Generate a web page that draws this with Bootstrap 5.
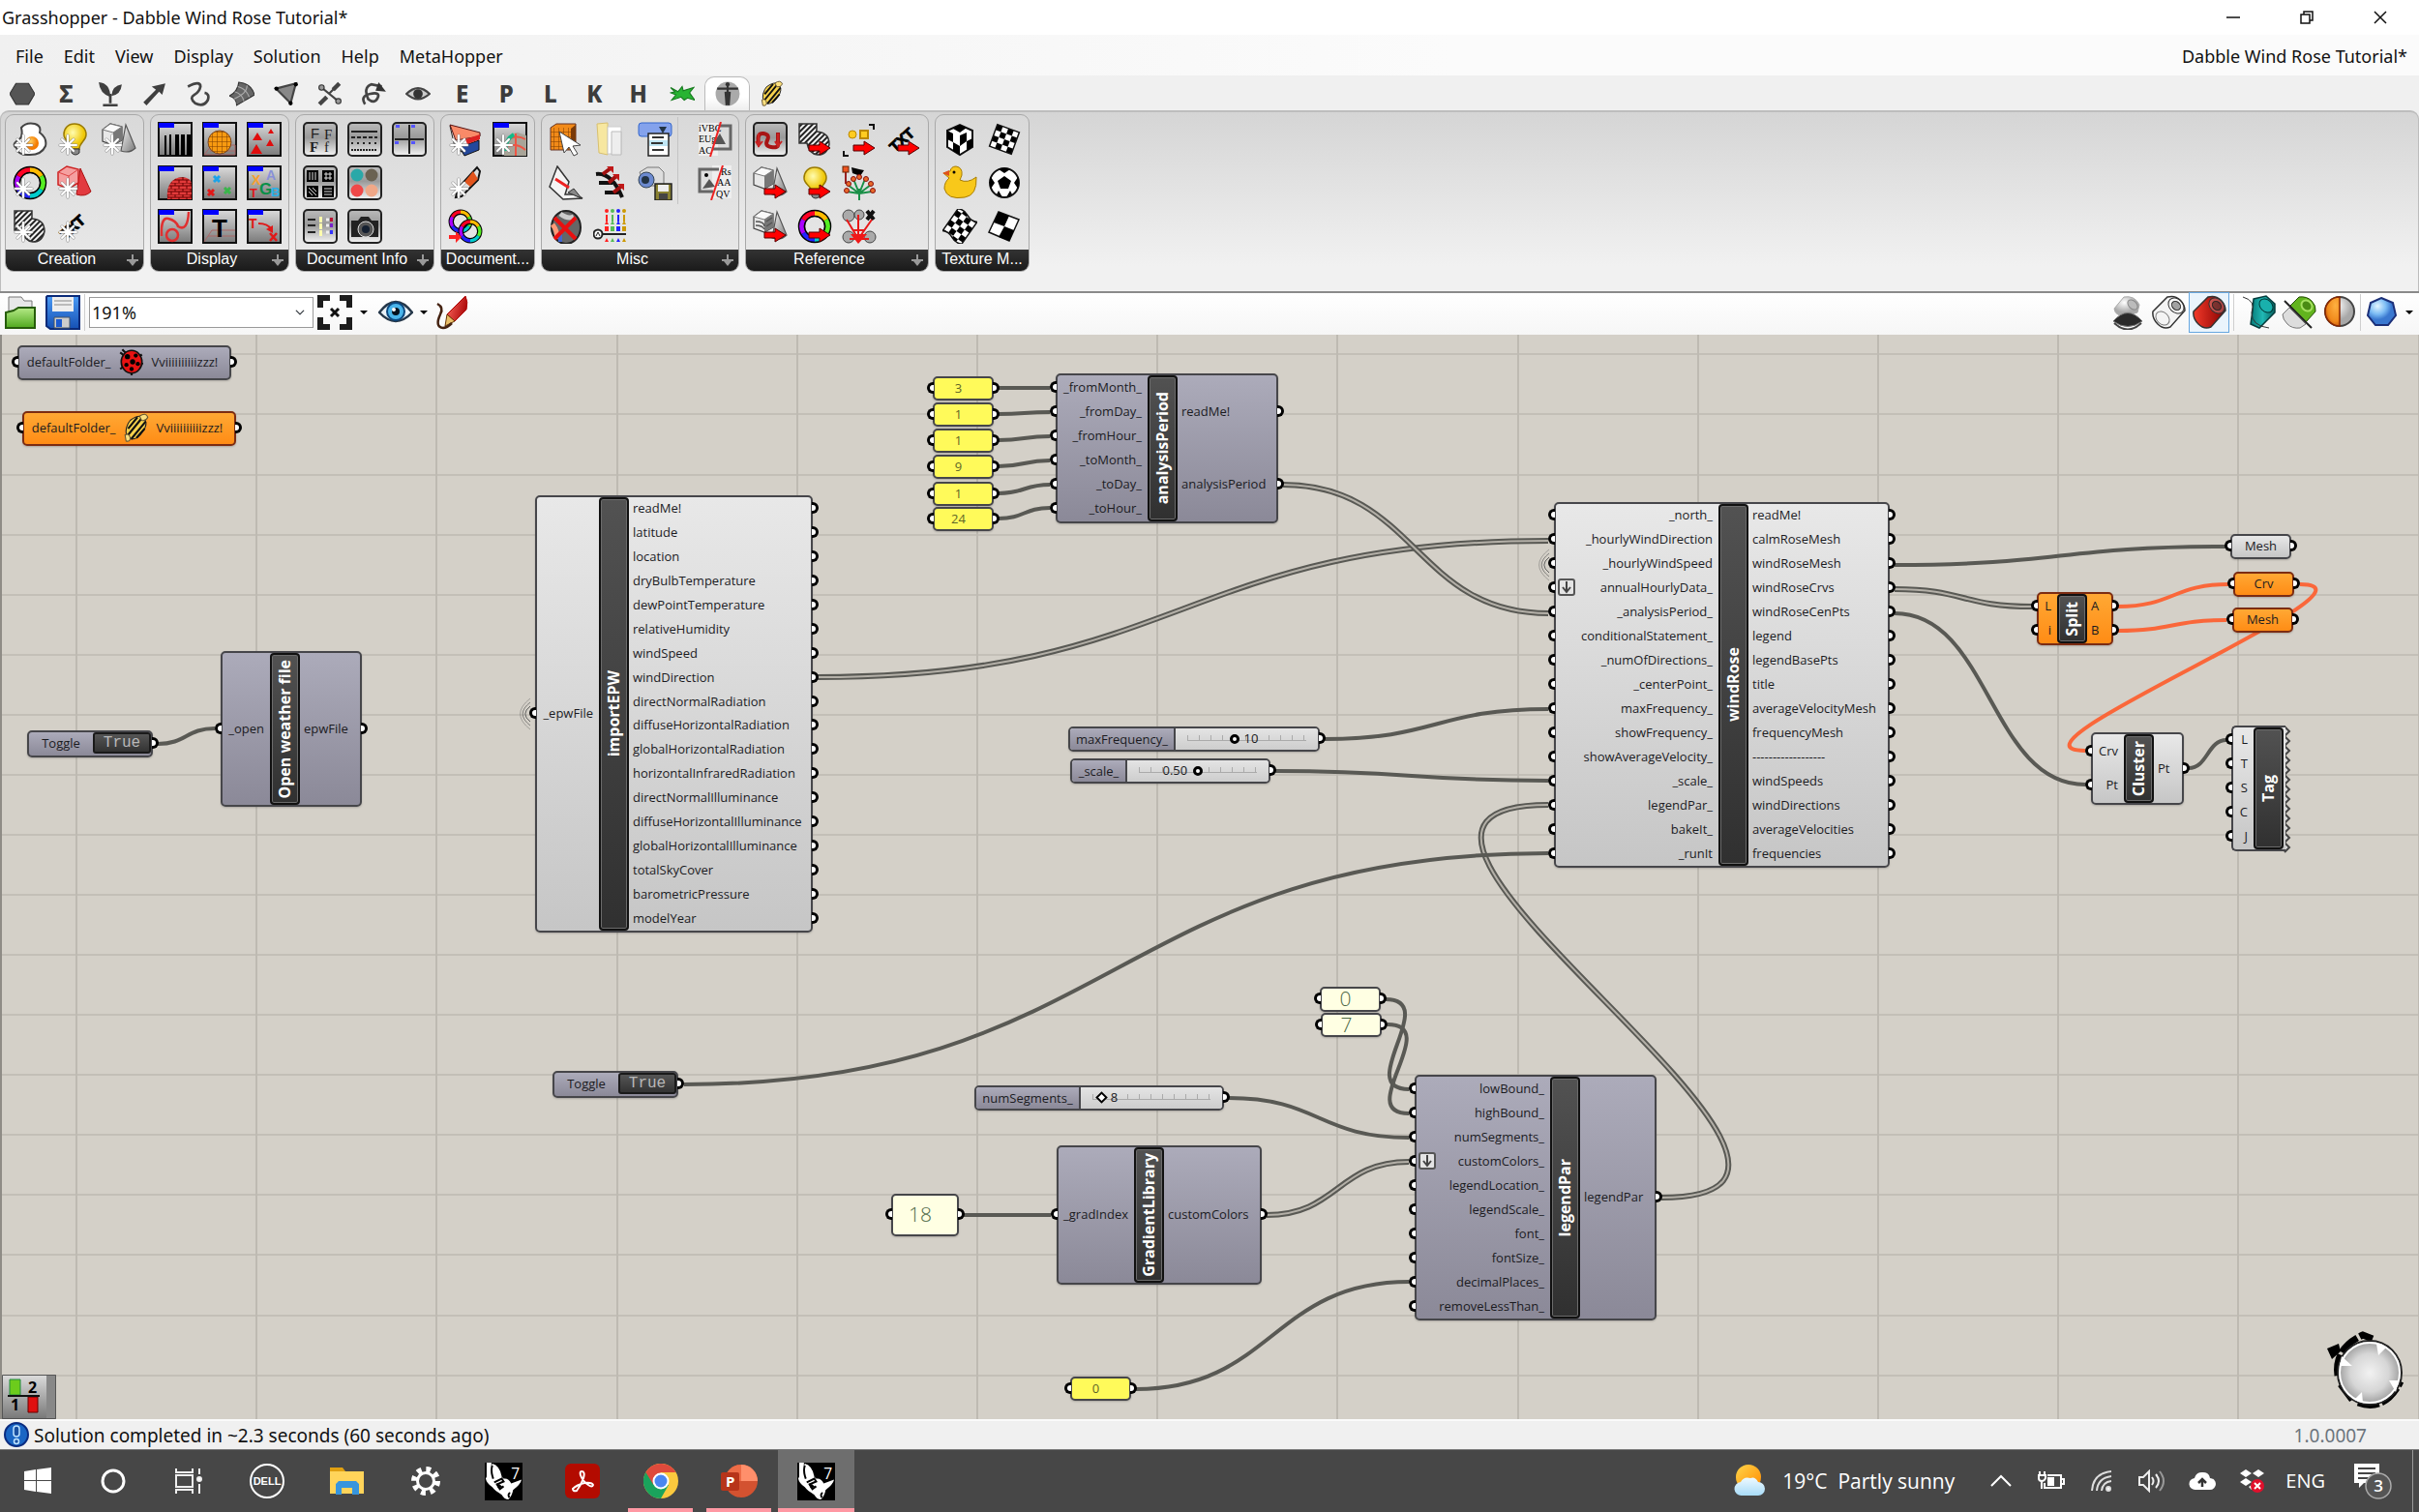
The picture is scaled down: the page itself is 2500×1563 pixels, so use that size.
<!DOCTYPE html>
<html lang="en">
<head>
<meta charset="utf-8">
<meta name="viewport" content="width=device-width, initial-scale=1">
<title>Grasshopper - Dabble Wind Rose Tutorial*</title>
<link href="https://cdn.jsdelivr.net/npm/bootstrap@5.3.0/dist/css/bootstrap.min.css" rel="stylesheet">
<style>
body{font-family:"Noto Sans","Open Sans",sans-serif;font-size:18px;line-height:24px;color:#111;background:#f0f0f0}
button{background:none;border:0;padding:0;color:inherit}
svg{display:block;flex:none}
.ic{width:36px;height:36px}
.titlebar{height:36px;background:#fff;padding:0 2px}
.winctl button{width:76px;height:36px}
.menubar{height:42px;padding:2px 12px 0 16px;background:linear-gradient(90deg,#f0f0f0,#fbfbfb 60%)}
.menubar a{color:#111;text-decoration:none}
.menus{gap:21px}
.tabs{height:36px;width:821px;padding-top:1px}
.tabs button{color:#3c3c3c;font-size:24px;font-weight:800}
.tabs button.on{background:linear-gradient(#fff 60%,#eee);border:1px solid #bbb;border-bottom:0;border-radius:10px 10px 0 0}
.ribbon{height:187px;gap:6px;border:1px solid #bdbdbd;border-top-width:2px;border-bottom:0;border-radius:9px 9px 0 0;background:linear-gradient(#d5d5d5,#f1f1f1 86%);padding:2px 4px}
.panelbox{border:1px solid #a9a9a9;border-radius:9px;background:linear-gradient(#d9d9d9,#e9e9e9);overflow:hidden;height:163px}
.cells{display:grid;grid-auto-flow:row;grid-auto-rows:45px;padding:2px 2px 0;height:139px}
.c2{grid-template-columns:repeat(2,46px)}
.c3{grid-template-columns:repeat(3,46px)}
.c4{grid-template-columns:repeat(4,46px)}
.cm{grid-template-columns:repeat(3,46px) 61px}
.cells button{display:flex;align-items:center;justify-content:center}
.cm button.far{padding-left:15px;border-left:1px solid #c4c4c4}
.cap{background:linear-gradient(#333,#1a1a1a);color:#fff;height:22px;font:16px/20px "Liberation Sans",sans-serif;padding:0 4px}
.toolbar{height:45px;border-top:2px solid #8a8a8a;background:linear-gradient(#fff,#f6f6f6);padding:0 2px 3px 3px}
.toolbar .form-select{width:232px;height:32px;border:1px solid #9a9a9a;border-radius:0;padding:0 8px 0 2px;font-size:18px;color:#111;background-color:#fff;background-size:12px 10px;background-position:right 7px center}
.tb{width:42px;height:42px;display:flex;align-items:center;justify-content:center}
.tb.slim{width:40px}
.tb.wide{width:44px}
.tb.on{border:1px solid #66a7e0;background:#eaf4fc}
.tsep{width:1px;height:38px;background:#cfcfcf}
.caret{width:0;height:0;border:4px solid transparent;border-top-color:#000;border-bottom:0}
.board{background-color:#d4d0c8;border-left:2px solid #8f8c86;min-height:0;font-family:"Open Sans","Noto Sans",sans-serif;font-size:13px;line-height:18px;color:#1c1c1c}
.board .wires{position:absolute;inset:0;width:100%;height:100%}
.node{position:absolute;border:2px solid #46464a;border-radius:5px;display:flex;color:#1b1b1f;box-shadow:0 1px 2px rgba(0,0,0,.2)}
.node.off{background:linear-gradient(#acabba,#8b8998)}
.node.lit{background:linear-gradient(#e8e8e8,#c6c6c6)}
.node.sel{background:linear-gradient(#ffa834,#ff8c15);border-color:#7c2c12}
.node.yel{background:#fffa5a}
.node.pale{background:#ffffe3}
.node.torn{border-right:0;border-radius:5px 0 0 5px;box-shadow:none}
.ports{display:flex;flex-direction:column}
.port{position:relative;flex:1 1 0;display:flex;align-items:center;white-space:nowrap;padding-bottom:2px}
.ins{flex:none}
.ins .port{justify-content:flex-end;padding-right:6px}
.outs{flex:1 1 0;min-width:0}
.outs .port{padding-left:4px}
.torn .outs{display:none}
.gin::before,.gout::after{content:"";position:absolute;top:50%;margin-top:-7px;width:7px;height:12px;background:#fff;border:3px solid #000}
.gin::before{left:-8px;border-right:0;border-radius:7px 0 0 7px}
.gout::after{right:-8px;border-left:0;border-radius:0 7px 7px 0}
.spine{width:31px;flex:none;border:2px solid #111;border-radius:4px;background:linear-gradient(#525252,#303030);box-shadow:inset 0 0 0 1px #6b6b6b;color:#fff;font-weight:700;font-size:16px;display:flex;align-items:center;justify-content:center}
.spine span{writing-mode:vertical-rl;transform:rotate(180deg);line-height:22px;padding-left:2px;white-space:nowrap}
.pull{position:absolute;left:2px;top:50%;margin-top:-10px}
.chip{justify-content:center;align-items:center}
.bug{margin:0 8px}
.battery .chip{padding-right:4px}
.mono{font-size:13px;color:#5f6628}
.mono .chip{padding-right:10px}
.mono.big{font-size:21px;font-weight:300;color:#4f6a48}
.truebox{font-family:"Liberation Mono",monospace;font-size:16px;color:#b8b8b8;background:linear-gradient(#555,#333);border:2px solid #1a1a1a;border-radius:3px;width:60px;line-height:18px;text-align:center}
.slabel{display:flex;align-items:center;justify-content:center;border-right:2px solid #46464a;background:linear-gradient(#acabba,#8b8998);border-radius:3px 0 0 3px;padding-bottom:1px}
.srail{position:relative;flex:1 1 0;padding:0 7px;background:linear-gradient(#e4e4e4,#cdcdcd);border-radius:0 3px 3px 0}
.srail input{appearance:none;-webkit-appearance:none;width:100%;height:21px;margin:0;display:block;background:linear-gradient(#aaa,#aaa) 5px 12px/calc(100% - 10px) 1px no-repeat,repeating-linear-gradient(90deg,#aaa 0 1px,transparent 1px 12px) 5px 7px/calc(100% - 10px) 6px no-repeat}
.srail input::-webkit-slider-thumb{-webkit-appearance:none;width:10px;height:10px;border:3px solid #000;border-radius:50%;background:#fff}
.srail input.dia::-webkit-slider-thumb{width:9px;height:9px;border-width:2px;border-radius:0;transform:rotate(45deg)}
.sval{position:absolute;top:1px}
.corner{position:absolute;left:0;bottom:0;width:56px;height:46px}
.compass{position:absolute;right:11px;bottom:9px}
.statusbar{height:31px;background:#f0f0f0;border-top:2px solid #fafafa;padding:0 54px 0 4px;font-size:19px}
.taskbar{height:65px;background:#474747;color:#fff;border-top:1px solid #777;font-family:"Open Sans","Noto Sans",sans-serif;font-size:21px}
.tk{width:81px;height:64px;display:flex;align-items:center;justify-content:center}
.tk.nar{width:78px}
.tk.dell{width:84px}
.tk.run{border-bottom:4px solid #ff98a3;width:67px;margin:0 7px;padding-top:4px}
.tk.act{background:#6e6e6e;width:79px;margin:0}
.weather{margin-right:6px}
.tray{padding-right:6px}
.tray button{display:flex;align-items:center;justify-content:center;width:52px;height:64px}
.notify{margin-right:14px}
.edge{border-right:1px solid #999;height:64px}
</style>
<script src="https://cdn.jsdelivr.net/npm/bootstrap@5.3.0/dist/js/bootstrap.bundle.min.js"></script>
</head>
<body>
<svg width="0" height="0" class="position-absolute" aria-hidden="true">
<defs>
<linearGradient id="gG" x2="1" y2="1"><stop stop-color="#fafafa"/><stop offset="1" stop-color="#777"/></linearGradient>
<linearGradient id="gTile" x2="0" y2="1"><stop stop-color="#ddd"/><stop offset="1" stop-color="#777"/></linearGradient>
<linearGradient id="gTile2" x2="0" y2="1"><stop stop-color="#bbb"/><stop offset=".45" stop-color="#999"/><stop offset="1" stop-color="#f4f4f4"/></linearGradient>
<linearGradient id="gRed" x2="1"><stop stop-color="#f33a2a"/><stop offset="1" stop-color="#850000"/></linearGradient>
<linearGradient id="gTeal" x2="1"><stop stop-color="#067a78"/><stop offset=".5" stop-color="#20b8b4"/><stop offset="1" stop-color="#06615f"/></linearGradient>
<linearGradient id="gGreen" x2="0" y2="1"><stop stop-color="#b6ea88"/><stop offset="1" stop-color="#4fa81d"/></linearGradient>
<linearGradient id="gBlue" x2="0" y2="1"><stop stop-color="#4b9bf5"/><stop offset="1" stop-color="#1550b4"/></linearGradient>
<linearGradient id="gPen" x2="1" y2=".3"><stop stop-color="#ff6a60"/><stop offset="1" stop-color="#b00c0c"/></linearGradient>
<radialGradient id="gBulb" cx=".4" cy=".35"><stop stop-color="#fffcb0"/><stop offset="1" stop-color="#f0c808"/></radialGradient>
<radialGradient id="gYolk" cx=".4" cy=".35"><stop stop-color="#ffd060"/><stop offset="1" stop-color="#f47a00"/></radialGradient>
<radialGradient id="gDial"><stop stop-color="#f2f2f2"/><stop offset=".6" stop-color="#d6d6d6"/><stop offset="1" stop-color="#9a9a9a"/></radialGradient>
<radialGradient id="gSky" cx=".35" cy=".3"><stop stop-color="#e4f6ff"/><stop offset=".6" stop-color="#7cbcf4"/><stop offset="1" stop-color="#3a78d0"/></radialGradient>
<radialGradient id="gOrb" cx=".4" cy=".3"><stop stop-color="#fff"/><stop offset="1" stop-color="#a8a8a8"/></radialGradient>
<radialGradient id="gOrange" cx=".7" cy=".3" r=".9"><stop stop-color="#ffb040"/><stop offset=".6" stop-color="#f08a1c"/><stop offset="1" stop-color="#a83000"/></radialGradient>
<linearGradient id="gSun" x2="1" y2="1"><stop stop-color="#ffd54a"/><stop offset="1" stop-color="#ff8a00"/></linearGradient>
<linearGradient id="gCloud" x2="0" y2="1"><stop stop-color="#eef9ff"/><stop offset="1" stop-color="#a8dcf8"/></linearGradient>
<pattern id="pHatch" width="4" height="4" patternUnits="userSpaceOnUse" patternTransform="rotate(-45)"><rect width="4" height="4" fill="#f4f4f4"/><rect width="4" height="2" fill="#222"/></pattern>
<pattern id="pChk" width="12" height="12" patternUnits="userSpaceOnUse"><rect width="12" height="12" fill="#fff"/><path d="M0 0h6v6H0zM6 6h6v6H6z"/></pattern>
<pattern id="pBrick" width="8" height="6" patternUnits="userSpaceOnUse"><rect width="8" height="6" fill="#e23a3a"/><path d="M0 0h8M0 3h8M2 0v3M6 3v3" stroke="#600" stroke-width="1"/></pattern>
<pattern id="pGrid" width="5" height="5" patternUnits="userSpaceOnUse"><path d="M0 0h5M0 0v5" stroke="#7a3a00" stroke-width="1"/></pattern>
<symbol id="spark" viewBox="0 0 36 36"><g stroke="#8a8a8a" stroke-width="3" stroke-linecap="round"><path d="M11 14v19M3 24h17M5 18l12 12M17 18L5 30"/></g><g stroke="#fff" stroke-width="2" stroke-linecap="round"><path d="M11 14v19M3 24h17M5 18l12 12M17 18L5 30"/></g></symbol>
<symbol id="arr" viewBox="0 0 36 36"><path d="M12 24h11v-4l11 7-11 7v-4H12z" fill="#f00" stroke="#500"/></symbol>
<symbol id="tile" viewBox="0 0 36 36"><path d="M0 0h36v36H0z" fill="url(#gTile)"/><path d="M1 1h34v34H1z" fill="none" stroke="#111" stroke-width="2"/><path d="M1 1h16v5H1z" fill="#00f"/></symbol>
<symbol id="rt" viewBox="0 0 36 36"><rect x="1" y="1" width="34" height="34" rx="4" fill="url(#gTile2)" stroke="#222" stroke-width="2"/></symbol>
<symbol id="geo" viewBox="0 0 36 36"><path d="M25 3l10 24q-6 6-15 3z" fill="url(#gG)" stroke="#555" stroke-width="1.200"/><path d="M1 8l8-6 12 3v14l-9 5-11-4z" fill="#e8e8e8" stroke="#444" stroke-width="1.200"/><path d="M12 11l9-6v14l-9 5z" fill="#777"/><path d="M1 8l11 3 9-6-12-3z" fill="#fafafa" stroke="#777"/></symbol>
<symbol id="wheel" viewBox="0 0 36 36"><g fill="none" stroke-width="4.500"><circle cx="18" cy="18" r="13.500" stroke="#000" stroke-width="7.500"/><path d="M18 4.500a13.500 13.500 0 0 1 11.700 6.700" stroke="#fb0"/><path d="M29.700 11.200a13.500 13.500 0 0 1 0 13.600" stroke="#5e2"/><path d="M29.700 24.800A13.500 13.500 0 0 1 18 31.500" stroke="#0cc"/><path d="M18 31.500a13.500 13.500 0 0 1-11.700-6.700" stroke="#22f"/><path d="M6.300 24.800a13.500 13.500 0 0 1 0-13.600" stroke="#a0f"/><path d="M6.300 11.200A13.500 13.500 0 0 1 18 4.500" stroke="#f02"/></g></symbol>
<symbol id="bulb" viewBox="0 0 36 36"><path d="M18 2c7 0 12 5 12 11 0 7-7 8-7 15h-8c0-7-8-8-8-15C7 7 11 2 18 2z" fill="url(#gBulb)" stroke="#997a00" stroke-width="1.500"/><path d="M15 28h8v4q-4 4-8 0z" fill="#888" stroke="#333"/></symbol>
<symbol id="hatch" viewBox="0 0 36 36"><path d="M2 2h18v8q13 1 13 13-2 11-12 11-9-1-11-12H2z" fill="url(#pHatch)" stroke="#333" stroke-width="1.500"/></symbol>
<symbol id="txt" viewBox="0 0 36 36"><text x="9" y="32" transform="rotate(-42 9 32)" font-family="Liberation Sans" font-weight="700" font-size="15" stroke="#000">TXT</text></symbol>
<symbol id="bee" viewBox="0 0 24 28"><path d="M6 7q8-6 13-3 5 6-1 14-5 8-12 7-7-5-2-15z" fill="#f7d24c" stroke="#222"/><path d="M4 15l9-11M4 21L18 4M7 25L21 8M12 24l8-9" stroke="#111" stroke-width="2"/><path d="M15 3q6-4 8 1-2 4-6 3zM1 21q4-2 5 3 0 4-4 3z" fill="#fbe080" stroke="#653"/></symbol>
<symbol id="lady" viewBox="0 0 24 28"><path d="M1 5l4 3M3 2l4 4M22 7l-3 2M23 16l-3-1M1 21l4-3M12 27v-3" stroke="#111" stroke-width="2"/><ellipse cx="12" cy="14" rx="10" ry="11" fill="#e81212" stroke="#111" stroke-width="1.500"/><circle cx="8" cy="9" r="2.500"/><circle cx="16" cy="8" r="2"/><circle cx="7" cy="17" r="2"/><circle cx="13" cy="14" r="2.500"/><circle cx="18" cy="16" r="2"/><circle cx="12" cy="21" r="2"/></symbol>
<symbol id="rhino" viewBox="0 0 40 40"><path d="M0 0h40v40H0z"/><path d="M8 1q8 2 10 14l2 2q5-1 8 5l11-4q-1 5-9 11-1 6-5 10-4 0-7-5-7-4-10-8-6-4-7-9 3-6 7-16z" fill="#fff"/><path d="M7 0v14l-5 2V0z" fill="#fff"/><path d="M8 3q-2 6 1 14M10 21l8-4 2 3-7 3 3 5 4-3M26 37q-2-4 1-5" fill="none" stroke="#000" stroke-width="2"/><path d="M12 22l4 1 3 3-5 1z"/><text x="28" y="17" fill="#fff" font-family="Open Sans" font-size="16">7</text></symbol>
<symbol id="tube" viewBox="0 0 36 36"><path d="M2 17L17 2q8-2 13 3t5 11L20 33q-7 3-13-3T2 17z" stroke="#333" stroke-width="1.500"/><ellipse cx="26" cy="11" rx="9" ry="7" transform="rotate(45 26 11)" fill="rgba(255,255,255,.25)" stroke="#333"/><ellipse cx="26" cy="11" rx="5" ry="4" transform="rotate(45 26 11)" fill="rgba(0,0,0,.35)" stroke="#222"/></symbol>
</defs>
</svg>

<div class="d-flex flex-column vh-100 overflow-hidden">
<header>
<div class="titlebar d-flex align-items-center justify-content-between">
<span>Grasshopper - Dabble Wind Rose Tutorial*</span>
<div class="winctl d-flex">
<button aria-label="Minimize"><svg class="mx-auto" width="14" height="14" stroke="#111" stroke-width="1.500"><path d="M0 7h14"/></svg></button>
<button aria-label="Restore"><svg class="mx-auto" width="14" height="14" fill="none" stroke="#111" stroke-width="1.500"><path d="M1 4h9v9H1zM4 4V1h9v9h-3"/></svg></button>
<button aria-label="Close"><svg class="mx-auto" width="14" height="14" stroke="#111" stroke-width="1.500"><path d="M1 1l12 12M13 1L1 13"/></svg></button>
</div>
</div>
<nav class="menubar d-flex align-items-center justify-content-between">
<div class="menus d-flex"><a href="#">File</a><a href="#">Edit</a><a href="#">View</a><a href="#">Display</a><a href="#">Solution</a><a href="#">Help</a><a href="#">MetaHopper</a></div>
<span>Dabble Wind Rose Tutorial*</span>
</nav>
<div class="tabs d-flex" id="tabs"></div>
<div class="ribbon d-flex" id="ribbon"></div>
<div class="toolbar d-flex align-items-center">
<button class="tb slim" aria-label="Open"><svg class="ic"><path d="M4 2h13l3 4h8v14H4z" fill="#e8e8e8" stroke="#777"/><path d="M1 18l8-2 5-3h17v21H1z" fill="url(#gGreen)" stroke="#265c0a" stroke-width="2"/></svg></button>
<button class="tb wide" aria-label="Save"><svg class="ic"><path d="M2 1h33v34H5l-4-3V2z" fill="url(#gBlue)" stroke="#0a2a78" stroke-width="2"/><path d="M7 2h22v15H7z" fill="#eee"/><path d="M9 6h18M9 10h18" stroke="#bbb" stroke-width="2"/><path d="M9 23h16v11H9z" fill="#ccc" stroke="#456"/><path d="M11 25h6v8h-6z" fill="#1b5ad0"/></svg></button>
<div class="tsep me-1"></div>
<select class="form-select flex-shrink-0" aria-label="Zoom"><option>191%</option></select>
<button class="tb wide" aria-label="Zoom extents"><svg class="ic"><path d="M3 13V3h10M23 3h10v10M33 23v10H23M13 33H3V23" fill="none" stroke="#1c1c1c" stroke-width="6"/><path d="M14 14l8 8M22 14l-8 8" stroke="#111" stroke-width="3"/></svg></button>
<span class="caret ms-1"></span>
<button class="tb ms-2" aria-label="Preview"><svg class="ic"><path d="M1 18Q18-4 35 18 18 36 1 18z" fill="#e9f2f8" stroke="#26384a" stroke-width="2.500"/><circle cx="18" cy="17" r="9" fill="#49b4ea" stroke="#0b4880" stroke-width="2"/><circle cx="18" cy="17" r="4" fill="#04121e"/><circle cx="16" cy="15" r="2" fill="#fff"/></svg></button>
<span class="caret ms-1"></span>
<button class="tb ms-1" aria-label="Sketch"><svg class="ic"><path d="M32 1q3 6 1 14L21 27l-8-7z" fill="url(#gPen)" stroke="#a00"/><path d="M13 20l8 7-10 5z" fill="#eac06a" stroke="#630"/><path d="M3 9q7 4 3 11-6 13 3 14 4 0 9-5" fill="none" stroke="#421" stroke-width="2.500"/></svg></button>
<div class="d-flex align-items-center ms-auto">
<button class="tb" aria-label="No preview"><svg class="ic"><path d="M4 14L14 2q11-2 16 8l-2 8-12 4q-11 0-12-8z" fill="url(#gOrb)" stroke="#aaa"/><ellipse cx="23" cy="10" rx="6" ry="4" transform="rotate(45 23 10)" fill="#bbb" stroke="#888"/><path d="M3 27q15-17 30 0-15 11-30 0z" fill="#2a2a2a" stroke="#777"/><path d="M4 29q14 13 28 0" fill="none" stroke="#444" stroke-width="2"/></svg></button>
<button class="tb" aria-label="Wireframe preview"><svg class="ic"><use href="#tube" fill="#f4f4f4"/><ellipse cx="12" cy="24" rx="8" ry="6" transform="rotate(45 12 24)" fill="none" stroke="#777"/></svg></button>
<button class="tb on" aria-label="Shaded preview"><svg class="ic"><use href="#tube" fill="url(#gRed)"/></svg></button>
<div class="tsep mx-1"></div>
<button class="tb" aria-label="Selected preview"><svg class="ic"><path d="M13 4l13-3 9 8v9L19 34l-9-4 2-14z" fill="url(#gTeal)" stroke="#043c3c" stroke-width="1.500"/><ellipse cx="26" cy="11" rx="8" ry="6" transform="rotate(45 26 11)" fill="#19b0ac" stroke="#033"/><path d="M2 2q14 4 9 16 0 14 18 16" fill="none" stroke="#333"/></svg></button>
<button class="tb" aria-label="Clip preview"><svg class="ic"><path d="M1 20l7-7 17 17-6 4q-8 1-13-4T1 20z" fill="#ddd" stroke="#777"/><path d="M9 11l9-9q8-1 13 4t4 11l-10 11z" fill="#62b41e" stroke="#244a06"/><ellipse cx="26" cy="11" rx="6" ry="5" transform="rotate(45 26 11)" fill="#4a8c14" stroke="#a4e060" stroke-width="2"/><path d="M3 6l28 28" stroke="#222" stroke-width="2"/></svg></button>
<button class="tb" aria-label="Material preview"><svg class="ic"><circle cx="18" cy="17" r="15" fill="url(#gOrb)" stroke="#444" stroke-width="2"/><path d="M18 2a15 15 0 0 0 0 30z" fill="url(#gOrange)" stroke="#8a2800" stroke-width="1.500"/></svg></button>
<div class="tsep"></div>
<button class="tb" aria-label="Quality"><svg class="ic"><path d="M18 3l12 5 3 13-8 10H12L4 21 7 8z" fill="url(#gSky)" stroke="#1b2f78" stroke-width="2"/></svg></button>
<span class="caret mx-1"></span>
</div>
</div>
</header>

<main class="board position-relative flex-grow-1 overflow-hidden" id="board">
<svg class="wires" id="wires"></svg>
<svg class="corner" viewBox="0 0 56 46"><path d="M0 0h56v46H0z" fill="url(#gTile)"/><path d="M46 0h10v46H46z" fill="#888"/><path d="M.5.5h55v45H.5z" fill="none" stroke="#555"/><path d="M8 5h11v16H8z" fill="#6ccc1c" stroke="#284"/><path d="M27 23h10v16H27z" fill="#e01010" stroke="#600"/><path d="M6 22h33" stroke="#111" stroke-width="2"/><text x="27" y="19" font-size="16" font-weight="700">2</text><text x="9" y="37" font-size="16" font-weight="700">1</text></svg>
<svg class="compass" width="86" height="82"><path d="M2 18l12-5 2 8-9 8z"/><path d="M13 46q-4-28 26-42l10 4M16 55l12 16M34 74q28 10 44-22" fill="none" stroke="#000" stroke-width="7" stroke-dasharray="22 3"/><circle cx="46" cy="43" r="33" fill="url(#gDial)" stroke="#222" stroke-width="2"/><circle cx="46" cy="43" r="31" fill="none" stroke="#fff" stroke-width="2"/><path d="M53 13l10 4-8 8zM17 26l11 10-13 0zM66 51h10l-3 12zM38 63l-8 8 9 3z" fill="#fff"/></svg>
</main>

<footer>
<div class="statusbar d-flex align-items-center justify-content-between">
<div class="d-flex align-items-center gap-1"><svg width="27" height="27"><circle cx="13" cy="13" r="12" fill="#1a66c4" stroke="#0a2c80" stroke-width="2"/><rect x="10" y="4" width="6" height="11" rx="3" fill="#1a50a0" stroke="#bfe4ff" stroke-width="1.500"/><circle cx="13" cy="20" r="2.500" fill="#1a50a0" stroke="#bfe4ff" stroke-width="1.500"/></svg><span>Solution completed in ~2.3 seconds (60 seconds ago)</span></div>
<span class="text-secondary">1.0.0007</span>
</div>
<div class="taskbar d-flex align-items-center">
<button class="tk nar" aria-label="Start"><svg width="28" height="28" fill="#fff"><path d="M0 4l12-2v11H0zM13 2l15-2v13H13zM0 14h12v11L0 23zM13 14h15v13l-15-2z"/></svg></button>
<button class="tk nar" aria-label="Cortana"><svg width="28" height="28"><circle cx="14" cy="14" r="11" fill="none" stroke="#fff" stroke-width="3"/></svg></button>
<button class="tk nar" aria-label="Task view"><svg width="28" height="28" fill="none" stroke="#eee" stroke-width="2"><path d="M1 1v4h17V1M1 8h17v12H1zM1 27v-4h17v4M25 1v6M25 17v10"/><circle cx="25" cy="12" r="2" fill="#fff"/></svg></button>
<button class="tk dell" aria-label="Dell"><svg width="38" height="38"><circle cx="19" cy="19" r="17" fill="none" stroke="#fff" stroke-width="2"/><text x="19" y="23" text-anchor="middle" font-size="11" font-weight="700" font-family="Liberation Sans" fill="#fff">DELL</text></svg></button>
<button class="tk" aria-label="File Explorer"><svg width="36" height="30"><path d="M0 1h13l3 4H0z" fill="#e0a010"/><path d="M0 5h35v23H0z" fill="#ffd45a"/><path d="M6 29V18l3-3h18l3 3v11h-7v-7H12v7z" fill="#3795dd"/></svg></button>
<button class="tk" aria-label="Settings"><svg width="32" height="32"><circle cx="16" cy="16" r="12" fill="none" stroke="#fff" stroke-width="6" stroke-dasharray="4.700 4.725"/><circle cx="16" cy="16" r="8.500" fill="none" stroke="#fff" stroke-width="3"/></svg></button>
<button class="tk" aria-label="Rhino 7"><svg width="39" height="39"><use href="#rhino"/></svg></button>
<button class="tk" aria-label="Acrobat"><svg width="36" height="36"><rect width="36" height="36" rx="6" fill="#b30b00"/><path d="M17 8q4 0 2 7-3 8-7 13-4 1-4-2 4-4 12-6 8-1 9 2-1 3-5 0-6-4-8-10-1-4 1-4z" fill="none" stroke="#fff" stroke-width="2"/></svg></button>
<button class="tk run" aria-label="Chrome"><svg width="36" height="36"><circle cx="18" cy="18" r="18" fill="#fbc93e"/><path d="M2.400 9A18 18 0 0 0 18 36l8-14-8-4z" fill="#1aa35c"/><path d="M18 9h15.600A18 18 0 0 0 2.400 9l8 13z" fill="#df4a3c"/><circle cx="18" cy="18" r="8.500" fill="#fff"/><circle cx="18" cy="18" r="6.500" fill="#4a86f0"/></svg></button>
<button class="tk run" aria-label="PowerPoint"><svg width="38" height="36"><circle cx="21" cy="18" r="17" fill="#d35230"/><path d="M21 1a17 17 0 0 1 17 17H21z" fill="#ff8f6b"/><path d="M21 1a17 17 0 0 0-17 17h17z" fill="#ed6c47"/><rect y="9" width="19" height="19" rx="2" fill="#b7341a"/><text x="5" y="24" font-size="15" font-weight="700" fill="#fff">P</text></svg></button>
<button class="tk run act" aria-label="Rhino 7 active"><svg width="39" height="39"><use href="#rhino"/></svg></button>
<div class="tray d-flex align-items-center ms-auto">
<svg width="34" height="34"><circle cx="15" cy="13" r="13" fill="url(#gSun)"/><path d="M8 32a7 7 0 0 1-1-14q3-6 10-4 5-2 8 4a7 7 0 0 1 0 14z" fill="url(#gCloud)"/></svg>
<span class="ms-3 weather">19°C&nbsp; Partly sunny</span>
<button class="ms-3" aria-label="Hidden icons"><svg width="22" height="14" fill="none" stroke="#fff" stroke-width="2"><path d="M1 12L11 2l10 10"/></svg></button>
<button aria-label="Battery"><svg width="28" height="22" fill="none" stroke="#fff" stroke-width="2"><path d="M10 5h14v13H7v-5M25 9h2v5h-2M2 1v4M7 1v4M1 5h7v3q-1 3-4 3t-3-3zM4 11v8"/><path d="M11 8h5v7h-5z" fill="#fff"/></svg></button>
<button aria-label="Network"><svg width="24" height="24" fill="none" stroke="#ddd" stroke-width="2"><path d="M2 22Q3 4 22 2M7 22Q8 9 22 7M12 22q1-9 10-10"/><circle cx="19" cy="20" r="2" fill="#fff"/></svg></button>
<button aria-label="Volume"><svg width="28" height="24" fill="none" stroke="#eee" stroke-width="2"><path d="M1 8h4l6-6v20l-6-6H1zM14 8q3 4 0 8M18 5q6 7 0 14"/><path d="M22 2q8 10 0 20" stroke="#999"/></svg></button>
<button aria-label="Backup"><svg width="28" height="20"><path d="M7 19a6 6 0 0 1-1-12q2-7 9-6 6 0 7 6a6 6 0 0 1 0 12z" fill="#fff"/><path d="M14 16V8m-4 4l4-4 4 4" fill="none" stroke="#333" stroke-width="2.500"/></svg></button>
<button aria-label="Dropbox"><svg width="28" height="26"><path d="M7 1l6 4-6 4-6-4zM20 1l6 4-6 4-6-4zM7 10l6 4-6 4-6-4zM13 17l-3 2 3 3z" fill="#fff"/><circle cx="19" cy="18" r="7" fill="#e0102c"/><path d="M16 15l6 6M22 15l-6 6" stroke="#fff" stroke-width="2"/></svg></button>
<span class="fs-5 ms-2">ENG</span>
<button class="ms-4 notify" aria-label="Notifications, 3 new"><svg width="44" height="42"><path d="M2 3h26v20H12l-5 5v-5H2z" fill="#fff"/><path d="M6 8h18M6 13h18M6 18h12" stroke="#444" stroke-width="2"/><circle cx="27" cy="26" r="13" fill="#555" stroke="#aaa" stroke-width="1.500"/><text x="27" y="32" text-anchor="middle" font-size="17" font-weight="600" fill="#fff">3</text></svg></button>
<span class="edge"></span>
</div>
</div>
</footer>
</div>

<script>
// Category tabs
const shape = (b) => `<svg class="mx-auto" width="26" height="26" viewBox="0 0 24 24">${b}</svg>`;
const D = '#3f3f3f';
const tabs = [
 ['Params', shape(`<path d="M6 2h12l6 10-6 10H6L0 12z" fill="#555" stroke="#333"/>`)],
 ['Maths', 'Σ'],
 ['Sets', shape(`<path d="M1 1q11 1 11 14Q2 12 1 1zM23 3q-9 1-10 11 9-1 10-11z" fill="${D}"/><path d="M12 12v9M5 23h14" stroke="${D}" stroke-width="2.500"/>`)],
 ['Vector', shape(`<path d="M23 2l-3 11-3-3L5 23l-3-3L14 8l-4-3z" fill="${D}"/>`)],
 ['Curve', shape(`<path d="M2 5q12-6 12 0-1 5-6 8t1 8q8 4 12-3 2-6-3-7" fill="none" stroke="#444" stroke-width="2.500"/>`)],
 ['Surface', shape(`<path d="M9 1q12 1 15 12L7 23q0-7-7-9 8-4 9-13z" fill="#666" stroke="#333"/><path d="M5 10q7 2 9 9M8 5q8 2 11 10M17 4q0 8-13 13" stroke="#aaa" fill="none"/>`)],
 ['Mesh', shape(`<path d="M2 7l19-5-5 19z" fill="#888" stroke="#444" stroke-width="2"/><circle cx="2.500" cy="7" r="2"/><circle cx="21" cy="3" r="2"/><circle cx="16" cy="21" r="2"/>`)],
 ['Intersect', shape(`<path d="M4 6l16 13M20 3l-9 9" stroke="#444" stroke-width="2"/><path d="M2 22l7-7M15 8l6-6" stroke="#444" stroke-width="4"/><circle cx="4" cy="6" r="2.500" fill="#999" stroke="#333"/><circle cx="20" cy="19" r="2.500" fill="#999" stroke="#333"/>`)],
 ['Transform', shape(`<path d="M3 22q-5-8 5-10t7 4-9 1Q1 6 9 3l10 2" fill="none" stroke="#444" stroke-width="2.500"/><path d="M16 1l7 9-10-1z" fill="#333"/>`)],
 ['Display', shape(`<path d="M1 12Q12 1 23 12 12 22 1 12z" fill="#ccc" stroke="#444" stroke-width="2"/><circle cx="12" cy="12" r="4.500" fill="#333"/>`)],
 ['Extra E', 'E'], ['Extra P', 'P'], ['Extra L', 'L'], ['Extra K', 'K'], ['Extra H', 'H'],
 ['Grasshopper tools', shape(`<path d="M1 6l7 4 4-5 1 4 10-3-4 5 5 7-7-2-3 2-3-3-9 3 4-5-5-2 4-1z" fill="#28b432" stroke="#167a1e"/>`)],
 ['Human', shape(`<circle cx="12" cy="12" r="11.500" fill="#aaa"/><path d="M2 7h20M12 2v20M10 10l1 13M14 10l-1 13" stroke="#333" stroke-width="2"/><circle cx="12" cy="3" r="2" fill="#333"/>`)],
 ['Honeybee', `<svg class="mx-auto" width="24" height="27"><use href="#bee"/></svg>`]
];
document.getElementById('tabs').innerHTML = tabs.map(([n, g]) =>
 `<button class="flex-fill w-100 ${n === 'Human' ? 'on' : ''}" aria-label="${n}">${g}</button>`).join('');

// Ribbon panels
const u = (id) => `<use href="#${id}"/>`;
const T = (x, y, s, c, t, f) => `<text x="${x}" y="${y}" font-size="${s}" font-weight="700" fill="${c}" font-family="${f || 'Liberation Sans'}">${t}</text>`;
const chk = (d) => `<path d="${d}" fill="url(#pChk)" stroke="#111" stroke-width="1.500"/>`;
const groups = [
 ['Creation', 'c3', 1, [
  `<path d="M9 6q5-6 14-4 7 2 5 9 8 6 6 14-4 9-16 9-12 1-14-7-6-4 3-9 4-3 2-12z" fill="#fff" stroke="#444" stroke-width="2"/><circle cx="20" cy="22" r="7" fill="url(#gYolk)"/>` + u('spark'),
  u('bulb') + u('spark'), u('geo') + u('spark'),
  u('wheel') + u('spark'),
  `<path d="M24 3l11 24q-6 6-15 3z" fill="#e23a40" stroke="#a11"/><path d="M1 7l9-6 12 3v14l-10 6-11-4z" fill="#f5a0a0" stroke="#c22" stroke-width="1.500"/><path d="M1 7l11 4v12M12 11l10-7" fill="none" stroke="#d44"/>` + u('spark'), '',
  u('hatch') + u('spark'), u('txt') + u('spark')]],
 ['Display', 'c3', 1, [
  u('tile') + `<path d="M8 14v20M13 13v21" stroke="#000" stroke-width="2"/><path d="M18 13h4v22h-4zM24 13h4v22h-4zM30 13h4v22h-4z"/>`,
  u('tile') + `<path d="M2 34l8-10h24v10zM8 30h26" fill="none" stroke="#a66"/><circle cx="18" cy="21" r="12" fill="#f79a10"/><circle cx="18" cy="21" r="12" fill="url(#pGrid)" stroke="#742"/>`,
  u('tile') + `<path d="M11 11l5 8H6zM25 7l3 5h-6zM24 18l4 7h-8zM10 23l6 10H4z" fill="#e00c0c"/>`,
  u('tile') + `<path d="M10 35q-2-22 16-23 9 1 9 8v15z" fill="url(#pBrick)"/>`,
  u('tile') + `<path d="M12 11l6 6M18 11l-6 6" stroke="#1ba3e8" stroke-width="3"/><path d="M6 25l6 6M12 25l-6 6" stroke="#e01818" stroke-width="3"/><path d="M23 23l6 6M29 23l-6 6" stroke="#39b54a" stroke-width="3"/>`,
  u('tile') + T(5, 20, 14, '#f7a030', 'X') + T(20, 15, 14, '#8890d8', 'A') + T(3, 33, 13, '#e01818', 'T') + T(13, 30, 17, '#0a9048', 'G') + T(25, 32, 13, '#2ab0e8', 'B'),
  u('tile') + `<path d="M4 28Q3 8 11 10t10 8q10 6 11-15" fill="none" stroke="#e03030" stroke-width="2.500"/><circle cx="15" cy="27" r="6" fill="none" stroke="#e03030" stroke-width="2.500"/>`,
  u('tile') + `<path d="M2 34l8-12h24M6 28h28" fill="none" stroke="#a66"/>` + T(10, 29, 26, '#000', 'T'),
  u('tile') + T(2, 20, 14, '#e01818', 'T') + `<path d="M12 15q10 0 13 6" fill="none" stroke="#e01818" stroke-width="2"/><path d="M27 17v8l-7-4z" fill="#e01818"/><path d="M24 25l7 8M31 25l-7 8" stroke="#e01818" stroke-width="2.500"/>`]],
 ['Document Info', 'c3', 1, [
  u('rt') + `<g fill="#222" font-size="15"><text x="8" y="17" font-family="Liberation Sans">F</text><text x="22" y="18" font-family="Liberation Serif">F</text><text x="7" y="31" font-weight="700" font-family="Liberation Serif">F</text><text x="22" y="31" font-family="Liberation Serif">f</text></g>`,
  u('rt') + `<g stroke="#222" stroke-width="2"><path d="M4 10h27"/><path d="M4 16h27" stroke-dasharray="4 2"/><path d="M4 22h27" stroke-dasharray="2 4"/><path d="M4 29h27" stroke-dasharray="2 1"/></g>`,
  u('rt') + `<path d="M18 3v30M3 18h30" stroke="#222" stroke-width="2"/><path d="M4 3h4v3H4zM20 3h4v3h-4zM3 20h4v3H3zM20 20h4v3h-4z" fill="#55f"/>`,
  u('rt') + `<path d="M4 5h12v12H4zM20 5h12v12H20zM4 21h12v12H4zM20 21h12v12H20z"/><path d="M7 7v8M10 7v8M13 7v8M22 9h8M22 13h8M24 7v8M28 7v8M6 23l8 8M10 23l4 4M6 27l4 4M22 24h8M22 27h8M22 30h8" stroke="#ddd"/>`,
  u('rt') + `<circle cx="10" cy="10" r="6.500" fill="#2aa8a8"/><circle cx="25" cy="10" r="6.500" fill="#6a6252"/><circle cx="10" cy="26" r="6.500" fill="#f04848"/><circle cx="25" cy="26" r="6.500" fill="#f0a888"/>`,
  '', u('rt') + `<path d="M5 11h8M5 17h8M5 24h8" stroke="#222" stroke-width="2"/><path d="M17 8h3v6h-3zM17 15h3v6h-3zM17 22h3v6h-3z" fill="#fffcae"/><path d="M24 11h3M24 17h3M24 24h3" stroke="#eee" stroke-width="3"/><path d="M28 9h3v4h-3z" fill="#b13"/><path d="M28 15h3v4h-3z" fill="#72c"/><path d="M28 22h3v4h-3z" fill="#33f"/>`,
  u('rt') + `<path d="M4 12h7l3-4h8l3 4h7v17H4z" fill="#222"/><circle cx="19" cy="21" r="8" fill="#555" stroke="#ddd"/><circle cx="19" cy="21" r="4" fill="#152030"/>`]],
 ['Document...', 'c2', 0, [
  `<path d="M2 4l31 9-3 9-16 9-7-5z" fill="#eee" stroke="#222"/><path d="M2 3l31 8v4L8 19z" fill="#f98a68" stroke="#511"/><path d="M12 26l20-7v10l-15 6z" fill="#24489c" stroke="#111"/><path d="M18 18l15-5v5l-13 5z" fill="#d22"/>` + u('spark'),
  u('tile') + `<path d="M12 35q-2-22 14-24l9 3v21z" fill="#a8a498"/><path d="M14 20q10-8 20-2M12 27q12-7 22 2M24 12v23" fill="none" stroke="#e54" stroke-width="2"/><path d="M14 30q-1-12 8-17" fill="none" stroke="#1b8" stroke-width="4"/>` + u('spark'),
  `<path d="M30 2l3 4-2 9-17 17-6 1 2-9z" fill="#ddd" stroke="#111" stroke-width="2"/><path d="M26 6l5 8-8 8-6-5z" fill="#e2541c"/>` + u('spark'), '',
  `<svg width="26" height="26" viewBox="0 0 36 36">${u('wheel')}</svg><svg x="10" y="10" width="26" height="26" viewBox="0 0 36 36">${u('wheel')}</svg><path d="M1 27h7v-4l6 6-6 6v-4H1z" fill="#f22"/>`]],
 ['Misc', 'cm', 1, [
  `<path d="M2 6l6-4h20v20l-5 7H2z" fill="#f28a18" stroke="#632"/><path d="M2 6h21v23H2z" fill="url(#pGrid)"/><path d="M23 7l5-4v19l-5 6z" fill="#7a3a08"/><path d="M11 10l22 14-8 1 5 8-4 2-5-9-5 6z" fill="#fff" stroke="#444"/>`,
  `<path d="M4 2l11-1v33l-9-2z" fill="#f7e7a0" stroke="#d8c070"/><path d="M15 5h14v28H15z" fill="#fff" stroke="#ccc"/><path d="M19 10h10v24H19z" fill="#eee" stroke="#bbb"/>`,
  `<rect x="1" y="1" width="34" height="14" rx="3" fill="#84a2ec" stroke="#36c"/><path d="M22 5h8l-4 7z" fill="#234"/><path d="M11 12h21v23H11z" fill="#fff" stroke="#222" stroke-width="1.500"/><path d="M12 19h19v6H12z" fill="#bfe6f4"/><path d="M15 16h12M14 22h12M15 29h12" stroke="#333" stroke-width="2"/>`,
  `<path d="M1 1h20v34H1z" fill="#eee"/><text x="1" y="10" font-size="10" font-family="Liberation Serif">iVBC</text><text x="1" y="21" font-size="10" font-family="Liberation Serif">EUg</text><text x="1" y="33" font-size="10" font-family="Liberation Serif">AC</text><path d="M23 4h11v24H15" fill="none" stroke="#666" stroke-width="3"/><path d="M15 23l8-11 6 11z" fill="#555"/><path d="M24 0L13 36" stroke="#e22" stroke-width="2"/>`,
  `<path d="M9 1l12 16-4 13h9l9 4-20 1L1 22z" fill="#f4f4f4" stroke="#333" stroke-width="1.500"/><path d="M7 14l14 9" stroke="#e22" stroke-width="3"/><path d="M20 28l6-4 8 10z" fill="#888" stroke="#333"/>`,
  `<path d="M3 9q16-2 27 24M6 18h14M12 28h14" fill="none" stroke="#111" stroke-width="4"/><path d="M10 9l8-6M16 18l8-7M21 28l9-7" stroke="#a01010" stroke-width="4"/><path d="M14 1h7v7zM20 9h7v7zM25 19h7v7z" fill="#c01818"/>`,
  `<path d="M2 7l8-5h12l5 5v14H8z" fill="#ddd" stroke="#777"/><circle cx="9" cy="15" r="8" fill="#6c8ad0" stroke="#345"/><circle cx="8" cy="15" r="4" fill="#234"/><path d="M18 19h17v17H18z" fill="#8a8232" stroke="#222" stroke-width="1.500"/><path d="M21 20h11v7H21z" fill="#eee"/><path d="M22 29h9v6h-9z" fill="#444"/>`,
  `<path d="M15 0h20v34H15z" fill="#eee"/><path d="M22 4H2v23h14" fill="none" stroke="#666" stroke-width="3"/><path d="M5 24l7-10 6 8z" fill="#555"/><circle cx="9" cy="10" r="2"/><text x="24" y="10" font-size="10" font-family="Liberation Serif">Rs</text><text x="20" y="21" font-size="10" font-family="Liberation Serif">AA</text><text x="19" y="33" font-size="10" font-family="Liberation Serif">QV</text><path d="M26 0L14 36" stroke="#e22" stroke-width="2"/>`,
  `<ellipse cx="18" cy="19" rx="15" ry="17" fill="#666" stroke="#222" stroke-width="2"/><path d="M4 16q6 8 4 14" stroke="#f97" stroke-width="5" fill="none"/><path d="M12 25v9" stroke="#46c" stroke-width="4"/><path d="M12 5q8 6 14 3" stroke="#ccc" stroke-width="5" fill="none"/><path d="M6 9l22 22M28 9L6 31" stroke="#e81010" stroke-width="4"/>`,
  ['#f22', '#5b5', '#22f', '#c90'].map((c, i) => `<g fill="${c}"><circle cx="${14 + i * 6}" cy="2" r="2"/><path d="M${13 + i * 6} 6h2v7h-2zM${14 + i * 6} 12l2 4h-4zM${12 + i * 6} 18h4v5h-4zM${14 + i * 6} 30l2 4h-4z"/></g>`).join('') + `<path d="M8 26h26" stroke="#222" stroke-width="2"/><circle cx="5" cy="26" r="4.500" fill="#fff" stroke="#222" stroke-width="2"/><path d="M3 28l2-4 2 4" fill="none" stroke="#222"/>`]],
 ['Reference', 'c4', 1, [
  u('rt') + `<path d="M6 22q-2-11 5-10t4 7 4 7 7-2V11" fill="none" stroke="#a81414" stroke-width="4"/><path d="M6 12v14M3 20l3 5 4-5M26 12v14M23 20l3 5 4-5" fill="none" stroke="#c82222" stroke-width="2"/>`,
  u('hatch') + u('arr'),
  `<circle cx="11" cy="13" r="4" fill="#fc2" stroke="#b80"/><path d="M19 9h8v8h-8z" fill="#fc2" stroke="#b80" stroke-width="2"/><path d="M28 3h5v5M2 30v5h5" fill="none" stroke="#111" stroke-width="2"/>` + u('arr'),
  u('txt') + u('arr'), u('geo') + u('arr'), u('bulb') + u('arr'),
  `<path d="M4 5v14" stroke="#922" stroke-width="2"/><rect x="1" y="1" width="6" height="6" fill="#e52" stroke="#620"/><path d="M10 2l8 2 5 1-4 6-8-3z"/><path d="M18 36V24M18 29L6 20M18 29l12-9M18 29L12 14M18 29l6-15M18 29l-13-2M18 29l13-2" stroke="#1a9048" stroke-width="2"/><g fill="#e86a2a" stroke="#811"><circle cx="5" cy="26" r="2.500"/><circle cx="7" cy="19" r="2.500"/><circle cx="12" cy="14" r="2.500"/><circle cx="18" cy="12" r="2.500"/><circle cx="25" cy="14" r="2.500"/><circle cx="30" cy="19" r="2.500"/><circle cx="32" cy="26" r="2.500"/></g>`, '',
  u('geo') + `<path d="M3 13q9 0 9 5M3 17q7 0 9 4M14 13l6-4M14 18l6-4" stroke="#555" fill="none" stroke-width="1.500"/>` + u('arr'), u('wheel') + u('arr'),
  `<g fill="#aaa" stroke="#444"><circle cx="7" cy="7" r="6"/><circle cx="18" cy="6" r="5"/><circle cx="29" cy="29" r="6"/><circle cx="7" cy="29" r="6"/></g><path d="M26 2l7 9M33 2l-7 9" stroke="#111" stroke-width="4"/><path d="M17 31L5 11M17 31V6M17 31L31 11M8 31h20M12 22h12" stroke="#e81818" stroke-width="2"/><path d="M9 26h17l-9 10z" fill="#f01818"/>`]],
 ['Texture M...', 'c2', 0, [
  `<path d="M5 9l13-6 13 6v17l-13 8-13-8z" fill="#fff" stroke="#111" stroke-width="2"/><path d="M18 3l7 3-7 5-7-4zM5 9l6 3v9l-6-3zM11 21l7 4v9l-7-4zM18 14l7-3v9l-7 5zM25 20l6-3v9l-6 4z"/>`,
  `<g transform="rotate(20 18 18)">${chk('M6 6h24v24H6z')}</g>`,
  `<path d="M1 8l7-2q1-5 6-5 7 1 6 9-1 3-2 5 8 4 17-3 1 19-12 21-18 3-21-9 0-7 5-11z" fill="#f8c81a" stroke="#a87c00"/><path d="M0 8l7-3v6z" fill="#e0521c"/><circle cx="12" cy="7" r="1.500"/>`,
  `<circle cx="18" cy="18" r="15" fill="#fff" stroke="#111" stroke-width="2"/><path d="M18 11l7 5-3 8h-8l-3-8zM12 4q6-3 12 0l-6 4zM32 12q2 6 0 12l-4-6zM4 12q-2 6 0 12l4-6zM10 30l2-4 4 7zM26 30l-2-4-4 7z"/>`,
  `<g transform="rotate(35 18 18)">${chk('M6 4q6-3 12 0 6 3 12 0v28q-6 3-12 0-6-3-12 0z')}</g>`,
  `<path d="M12 3l21 8-10 22L2 24z" fill="#fff" stroke="#111" stroke-width="1.500"/><path d="M12 3l11 4-5 11-11-4zM18 18l10 4-5 11-11-4z"/>`]]
];
document.getElementById('ribbon').innerHTML = groups.map(([name, cls, plus, icons]) =>
 `<section class="panelbox"><div class="cells ${cls}">${icons.map((b, i) => b
  ? `<button aria-label="${name} ${i + 1}" ${cls === 'cm' && (i === 3 || i === 7) ? 'class="far"' : ''}><svg class="ic">${b}</svg></button>` : '<span></span>').join('')}</div>
  <div class="cap d-flex justify-content-center position-relative"><span class="text-nowrap ${plus ? 'pe-3' : ''}">${name}</span>${plus ? '<svg class="position-absolute end-0 top-0 mt-1 me-1" width="14" height="14"><path d="M7 1v11M1 7h12" stroke="#999" stroke-width="2"/><path d="M3 8h8l-4 5z" fill="#999"/></svg>' : ''}</div></section>`).join('');

// Canvas document. World units are shown through the current pan.
const pan = {x: -2, y: -346};
const board = document.getElementById('board');
const add = (x, y, w, h, cls, html) => {
 const n = document.createElement('div');
 n.className = 'node ' + cls;
 n.style.cssText = `left:${x + pan.x}px;top:${y + pan.y}px;width:${w}px;height:${h}px`;
 n.innerHTML = html;
 board.appendChild(n);
};
const port = (t, g) => `<div class="port ${t === null ? '' : g}">${t === null ? '' : (t[0] === '>' ? '<svg class="pull" width="18" height="18"><rect x="1" y="1" width="16" height="16" rx="2" fill="#e4e4e4" stroke="#555" stroke-width="2"/><path d="M9 3v11M5 9l4 5 4-5" fill="none" stroke="#444" stroke-width="2"/></svg>' + t.slice(1) : t)}</div>`;
const comp = (x, y, w, h, inW, cls, name, ins, outs) => add(x, y, w, h, cls,
 `<div class="ports ins" style="width:${inW}px">${ins.map(t => port(t, 'gin')).join('')}</div><div class="spine"><span>${name}</span></div><div class="ports outs">${outs.map(t => port(t, 'gout')).join('')}</div>`);
comp(553, 512, 287, 452, 64, 'lit', 'importEPW', ['_epwFile'], ['readMe!', 'latitude', 'location', 'dryBulbTemperature', 'dewPointTemperature', 'relativeHumidity', 'windSpeed', 'windDirection', 'directNormalRadiation', 'diffuseHorizontalRadiation', 'globalHorizontalRadiation', 'horizontalInfraredRadiation', 'directNormalIlluminance', 'diffuseHorizontalIlluminance', 'globalHorizontalIlluminance', 'totalSkyCover', 'barometricPressure', 'modelYear']);
comp(228, 673, 146, 161, 49, 'off', 'Open weather file', ['_open'], ['epwFile']);
comp(1091, 386, 230, 155, 93, 'off', 'analysisPeriod', ['_fromMonth_', '_fromDay_', '_fromHour_', '_toMonth_', '_toDay_', '_toHour_'], ['readMe!', 'analysisPeriod']);
comp(1606, 519, 347, 378, 168, 'lit', 'windRose', ['_north_', '_hourlyWindDirection', '_hourlyWindSpeed', '>annualHourlyData_', '_analysisPeriod_', 'conditionalStatement_', '_numOfDirections_', '_centerPoint_', 'maxFrequency_', 'showFrequency_', 'showAverageVelocity_', '_scale_', 'legendPar_', 'bakeIt_', '_runIt'], ['readMe!', 'calmRoseMesh', 'windRoseMesh', 'windRoseCrvs', 'windRoseCenPts', 'legend', 'legendBasePts', 'title', 'averageVelocityMesh', 'frequencyMesh', '------------------', 'windSpeeds', 'windDirections', 'averageVelocities', 'frequencies']);
comp(1092, 1184, 212, 144, 78, 'off', 'GradientLibrary', ['_gradIndex'], ['customColors']);
comp(1462, 1111, 250, 254, 138, 'off', 'legendPar', ['lowBound_', 'highBound_', 'numSegments_', '>customColors_', 'legendLocation_', 'legendScale_', 'font_', 'fontSize_', 'decimalPlaces_', 'removeLessThan_'], ['legendPar']);
comp(2105, 612, 79, 55, 19, 'sel', 'Split', ['L', 'i'], ['A', 'B']);
comp(2161, 757, 96, 75, 32, 'lit', 'Cluster', ['Crv', 'Pt'], ['Pt']);
comp(2306, 750, 56, 130, 21, 'lit torn', 'Tag', ['L', 'T', 'S', 'C', 'J'], [null]);

const chip = (x, y, w, h, cls, html) => add(x, y, w, h, cls, `<div class="port chip gin gout">${html}</div>`);
chip(2305, 552, 63, 26, 'lit', 'Mesh');
chip(2308, 591, 63, 26, 'sel', 'Crv');
chip(2307, 628, 63, 26, 'sel', 'Mesh');
const battery = (id) => `defaultFolder_<svg class="bug" width="26" height="30"><use href="#${id}"/></svg>Vviiiiiiiiiizzz!`;
chip(18, 357, 221, 36, 'off battery', battery('lady'));
chip(23, 425, 221, 36, 'sel battery', battery('bee'));
const panel = (x, y, w, h, cls, t) => chip(x, y, w, h, 'mono ' + cls, t);
[[389, 3], [416, 1], [443, 1], [470, 9], [498, 1], [524, 24]].forEach(([y, v]) => panel(964, y, 63, 25, 'yel', v));
panel(1106, 1423, 63, 25, 'yel', '0');
panel(1364, 1020, 63, 26, 'pale big', '0');
panel(1365, 1047, 63, 25, 'pale big', '7');
panel(921, 1234, 70, 44, 'pale big', '18');
const toggle = (x, y) => add(x, y, 130, 28, 'off', `<div class="port chip">Toggle</div><div class="port gout flex-grow-0"><span class="truebox">True</span></div>`);
toggle(28, 755);
toggle(571, 1107);
const slider = (x, y, w, lw, name, v, val, cls, left) => add(x, y, w, 26, 'lit',
 `<label class="slabel" for="${name}" style="width:${lw}px">${name}</label><div class="srail"><input type="range" class="${cls}" id="${name}" min="0" max="100" value="${v}"><span class="sval" style="left:${left}%">${val}</span></div><span class="port gout flex-grow-0"></span>`);
slider(1104, 751, 260, 109, 'maxFrequency_', 40, '10', '', 48);
slider(1106, 784, 207, 57, '_scale_', 50, '0.50', '', 25);
slider(1007, 1122, 258, 108, 'numSegments_', 8, '8', 'dia', 21);

// Wires: [x1, y1, x2, y2, kind, handle length]
const wires = [
 [845, 700, 1600, 559, 'd'], [1326, 501, 1600, 634, 'd'], [1369, 764, 1600, 733], [1318, 797, 1600, 807],
 [1717, 1238, 1600, 832, 'd', 280], [707, 1121, 1600, 882], [163, 769, 222, 753],
 [1032, 401, 1085, 401], [1032, 428, 1085, 426], [1032, 455, 1085, 451], [1032, 482, 1085, 476], [1032, 510, 1085, 501], [1032, 536, 1085, 525],
 [1432, 1033, 1456, 1126, '', 58], [1434, 1059, 1456, 1151, '', 58], [1270, 1135, 1456, 1176], [1309, 1256, 1456, 1201, 'd'],
 [1174, 1436, 1456, 1325], [996, 1256, 1086, 1256], [1958, 584, 2300, 565], [1958, 609, 2100, 627, 'd'], [1958, 634, 2155, 811],
 [2262, 794, 2301, 765], [2189, 627, 2303, 604, 's'], [2189, 652, 2301, 641, 's'], [2377, 604, 2155, 776, 's', 104]
];
let s = '';
for (let x = 79; x < 2500; x += 186.2) s += `<path d="M${Math.round(x) + pan.x} 0V3000" stroke="#b9b5ad" stroke-width="2" opacity=".8"/>`;
for (let y = 366.4; y < 1500; y += 62.07) s += `<path d="M0 ${Math.round(y) + pan.y}H6000" stroke="#bfbbb3" stroke-width="2" opacity=".8"/>`;
wires.forEach(([a, b, c, d, k, h]) => {
 const o = h || (c - a) / 2;
 const p = `M${a + pan.x} ${b + pan.y}C${a + o + pan.x} ${b + pan.y} ${c - o + pan.x} ${d + pan.y} ${c + pan.x} ${d + pan.y}`;
 s += `<path d="${p}" fill="none" stroke="${k === 's' ? '#fa673a' : '#595954'}" stroke-width="${k === 'd' ? 6 : 4}"/>`;
 if (k === 'd') s += `<path d="${p}" fill="none" stroke="#b4b0a8" stroke-width="2"/>`;
});
// Wireless input marks
[[548, 738], [1601, 584]].forEach(([x, y]) => [8, 12, 16].forEach((r, i) => {
 s += `<path d="M${x + pan.x} ${y + pan.y - r}q${-r * 1.3} ${r} 0 ${2 * r}" fill="none" stroke="#555" opacity="${.9 - i * .25}"/>`;
}));
// Torn right edge of the Tag component
let z = 'M2361 751';
for (let i = 0; i < 13; i++) z += 'l5 5l-5 5';
s += `<g transform="translate(${pan.x} ${pan.y})"><path d="${z}" fill="#ddd" stroke="#444" stroke-width="2"/></g>`;
document.getElementById('wires').innerHTML = s;
</script>
</body>
</html>
